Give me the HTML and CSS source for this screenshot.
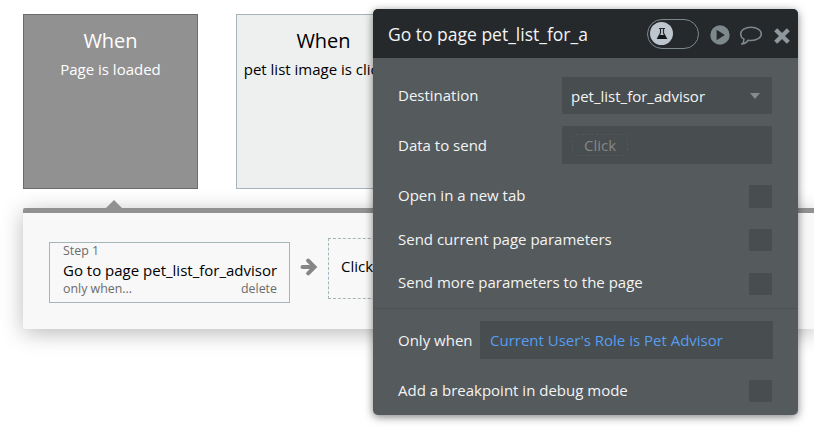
FILE: index.html
```html
<!DOCTYPE html>
<html lang="en">
<head>
<meta charset="utf-8">
<title>Workflow editor</title>
<link rel="stylesheet" href="styles.css">
</head>
<body>
<main class="editor">
  <section class="events">
    <article class="event event-active">
      <h2>When</h2>
      <p>Page is loaded</p>
    </article>
    <article class="event">
      <h2>When</h2>
      <p>pet list image is clicked</p>
    </article>
  </section>
  <section class="actions">
    <span class="pointer"></span>
    <article class="step">
      <span class="small">Step 1</span>
      <span class="step-name">Go to page pet_list_for_advisor</span>
      <span class="step-foot small"><span>only when...</span><span>delete</span></span>
    </article>
    <svg class="arrow" width="18" height="18" viewBox="0 0 18 18"><path d="M2.500 9H14M8.200 2.700 14.500 9l-6.300 6.300" fill="none" stroke="#868686" stroke-width="4" stroke-linecap="round" stroke-linejoin="miter"/></svg>
    <div class="add-step">Click</div>
  </section>
</main>

<aside class="popup">
  <header class="popup-head">
    <h1>Go to page pet_list_for_a</h1>
    <span class="toggle"><span class="knob"><svg width="12" height="14" viewBox="0 0 12 14"><path d="M3 1.500h6M4.500 2v4L1.600 11.500h8.800L7.500 6V2" fill="none" stroke="#25292b" stroke-width="1.200"/><path d="M3.400 8h5.200l2.200 4H1.200z" fill="#15191b"/></svg></span></span>
    <svg class="play" width="20" height="20" viewBox="0 0 20 20"><circle cx="10" cy="10" r="9.700" fill="#7d888c"/><path d="M6.600 4.800v10.400L14.800 10z" fill="#25292c"/></svg>
    <svg class="comment" width="24" height="20" viewBox="0 0 24 20"><path d="M12 1.300c5.700 0 10.300 2.900 10.300 6.600s-4.600 6.600-10.300 6.600c-1 0-1.900-.1-2.800-.3-1.300 1.800-3.300 3.600-6.500 3.900 1.600-1.200 2.300-2.900 2.300-4.900C3 12.100 1.700 10.200 1.700 7.900c0-3.700 4.600-6.600 10.300-6.600z" fill="none" stroke="#7d888c" stroke-width="1.500" stroke-linejoin="round"/></svg>
    <svg class="close" width="16" height="16" viewBox="0 0 16 16"><path d="M3.200 3.200l9.600 9.600M12.800 3.200l-9.600 9.600" stroke="#8f999d" stroke-width="4.300" stroke-linecap="square"/></svg>
  </header>
  <div class="fields">
    <div class="row destination"><label>Destination</label><div class="input select"><span>pet_list_for_advisor</span><i class="caret"></i></div></div>
    <div class="row data"><label>Data to send</label><div class="input"><span class="placeholder">Click</span></div></div>
    <div class="row toggle-row"><label>Open in a new tab</label><span class="box tall"></span></div>
    <div class="row toggle-row"><label>Send current page parameters</label><span class="box"></span></div>
    <div class="row toggle-row last"><label>Send more parameters to the page</label><span class="box"></span></div>
  </div>
  <div class="conditions">
    <div class="row"><label>Only when</label><div class="input expression">Current User's Role is Pet Advisor</div></div>
    <div class="row debug"><label>Add a breakpoint in debug mode</label><span class="box"></span></div>
  </div>
</aside>
</body>
</html>
```

FILE: styles.css
```css
* { box-sizing: border-box; }
body {
  margin: 0;
  width: 814px;
  height: 429px;
  overflow: hidden;
  background: #fff;
  color: #000;
  font: 15px/20px "Open Sans", "Liberation Sans", sans-serif;
}
h1, h2, p { margin: 0; font-weight: 400; }
.editor { padding: 14px 0 0 23px; }
.events { display: flex; gap: 38px; }
.event {
  width: 175px;
  height: 175px;
  padding-top: 12px;
  border: 1px solid #a5b5ba;
  background: #eef0f0;
  text-align: center;
  white-space: nowrap;
}
.event h2 { font-size: 20px; line-height: 28px; }
.event p { margin-top: 3px; line-height: 22px; }
.event-active { border-color: #6c6c6c; background: #919191; color: #fff; }
.actions {
  position: relative;
  display: flex;
  align-items: flex-start;
  height: 121px;
  margin-top: 19px;
  padding: 25px 0 0 26px;
  border-top: 5px solid #919191;
  border-radius: 2px 0 0 2px;
  background: #f8f8f8;
  box-shadow: 0 4px 22px rgba(0, 0, 0, .27), 20px 4px 22px rgba(0, 0, 0, .02);
}
.pointer {
  position: absolute;
  top: -13px;
  left: 83px;
  border: 8px solid transparent;
  border-top: 0;
  border-bottom-color: #919191;
}
.step {
  display: flex;
  flex-direction: column;
  width: 241px;
  height: 61px;
  margin-top: 4px;
  padding: 0 12px 0 13px;
  border: 1px solid #a5b5ba;
  white-space: nowrap;
}
.small { color: #6b6b6b; font-size: 12.400px; line-height: 16px; }
.step-name { line-height: 22px; }
.step-foot { display: flex; justify-content: space-between; }
.arrow { margin: 20px 10px 0; }
.add-step {
  width: 241px;
  height: 61px;
  padding: 0 12px;
  border: 1px dashed #a5b5ba;
  line-height: 54px;
}
.popup {
  position: absolute;
  top: 9px;
  left: 373px;
  width: 425px;
  height: 406px;
  border-radius: 5px;
  overflow: hidden;
  background: #555a5d;
  color: #f3f4f4;
  box-shadow: 0 2px 8px rgba(0, 0, 0, .5);
}
.popup-head {
  display: flex;
  align-items: center;
  height: 49px;
  padding: 0 7px 0 15px;
  background: #25292c;
}
.popup-head h1 { width: 259px; font-size: 17.500px; line-height: 24px; }
.toggle {
  display: flex;
  align-items: center;
  width: 52px;
  height: 30px;
  padding-left: 2px;
  border: 1px solid #7d888c;
  border-radius: 15px;
  flex-shrink: 0;
}
.popup-head svg { flex-shrink: 0; }
.knob { display: grid; place-items: center; width: 23px; height: 23px; border-radius: 50%; background: #bdc5ce; }
.play { margin: 3px 0 0 11px; }
.comment { margin: 4px 0 0 9px; }
.close { margin: 5px 0 0 11px; }
.fields { height: 251px; padding: 19px 26px 0 25px; border-bottom: 1px solid #4c5153; }
.row { display: flex; align-items: center; justify-content: space-between; white-space: nowrap; }
.row label { padding-bottom: 2px; }
.destination { height: 37px; }
.data { height: 38px; margin: 12px 0 10px; }
.data label { padding-bottom: 1px; }
.toggle-row { height: 44px; }
.last label { margin-bottom: 2px; }
.input {
  display: flex;
  align-items: center;
  width: 210px;
  height: 100%;
  padding: 0 10px 0 9px;
  border-radius: 1px;
  background: #484d4f;
}
.select { justify-content: space-between; padding: 1px 12px 0 9px; }
.caret { margin-bottom: 1px; border: 5.500px solid transparent; border-top: 6px solid #868c8e; border-bottom: 0; }
.placeholder { margin: 0 0 1px 1px; padding: 0 11px; border: 1px dashed #515658; border-radius: 4px; color: #858888; }
.box { width: 23px; height: 22px; border-radius: 1px; background: #484d4f; }
.tall { height: 23px; }
.conditions { padding: 12px 25px 0; }
.conditions .row:first-child { height: 38px; }
.conditions .row:first-child label { padding-bottom: 1px; }
.expression { width: 293px; padding: 0 0 1px 10px; color: #579eef; }
.debug { height: 64px; padding-right: 1px; }
```
